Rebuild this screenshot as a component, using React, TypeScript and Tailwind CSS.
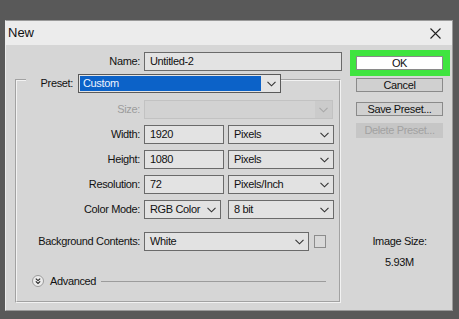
import React from "react";

const Chevron = ({ color = "#333" }: { color?: string }) => (
  <svg width="9" height="6" viewBox="0 0 9 6" className="shrink-0">
    <polyline points="0.5,0.8 4.5,4.8 8.5,0.8" fill="none" stroke={color} strokeWidth="1.1" />
  </svg>
);

const Select = ({ value, w }: { value: string; w: string }) => (
  <div className={`flex h-[19px] shrink-0 items-center justify-between border border-[#6a6a6a] bg-[#e2e2e2] pl-[5px] pr-[4px] ${w}`}>
    <span>{value}</span>
    <Chevron />
  </div>
);

const Field = ({ value, w }: { value: string; w: string }) => (
  <div className={`flex h-[19px] shrink-0 items-center border border-[#6a6a6a] bg-[#e3e3e3] pl-[5px] ${w}`}>
    {value}
  </div>
);

const Row = ({ label, children, dim }: { label: string; children: React.ReactNode; dim?: boolean }) => (
  <div className="flex h-[19px] items-center gap-[4px]">
    <span className={`w-[123px] shrink-0 text-right ${dim ? "text-[#9c9c9c]" : ""}`}>{label}</span>
    {children}
  </div>
);

export default function App() {
  return (
    <div className="h-[319px] w-[459px] overflow-hidden bg-[#595959] pl-[5px] pt-[20px] font-['Liberation_Sans',Arial,sans-serif] text-[11px] tracking-[-0.35px] text-[#111]">
      <div className="flex h-[291px] w-[448px] flex-col border border-[#9a9a9a] border-l-[#ececec] bg-[#d6d6d6]">
        {/* title bar */}
        <div className="flex h-[24px] shrink-0 items-center justify-between bg-[#ececec] pl-[2px] pr-[11px]">
          <span className="text-[13px] tracking-normal">New</span>
          <svg width="11" height="11" viewBox="0 0 11 11">
            <path d="M0.5 0.5 L10.5 10.5 M10.5 0.5 L0.5 10.5" stroke="#222" strokeWidth="1.1" />
          </svg>
        </div>

        <div className="flex">
          {/* left side */}
          <div className="w-[335px] shrink-0 pt-[7px]">
            <div className="flex h-[19px] items-center gap-[4px]">
              <span className="w-[134px] shrink-0 text-right">Name:</span>
              <Field value="Untitled-2" w="w-[198px]" />
            </div>

            <div className="ml-[9px] mt-[8px] w-[326px] border border-[#a2a2a2] border-b-[#f2f2f2] border-r-[#f2f2f2]">
              <div className="border border-[#f2f2f2] border-b-[#a2a2a2] border-r-[#a2a2a2] pb-[14px]">
                {/* legend */}
                <div className="-mt-[7px] flex h-[19px] items-center pl-[9px]">
                  <span className="flex h-[19px] w-[52px] items-center justify-end bg-[#d6d6d6] pr-[5px]">Preset:</span>
                  <div className="flex h-[19px] w-[203px] items-stretch border border-[#5a5a5a] bg-[#e4e4e4]">
                    <span className="m-[1px] flex flex-1 items-center bg-[#0c62c8] pl-[3px] text-[#eef4ff]">Custom</span>
                    <span className="flex w-[18px] items-center justify-center">
                      <Chevron />
                    </span>
                  </div>
                </div>

                <div className="mt-[7px] flex flex-col gap-[6px]">
                  <Row label="Size:" dim>
                    <div className="flex h-[19px] w-[189px] items-center justify-end border border-[#c2c2c2] bg-[#d2d2d2]">
                      <span className="flex h-full w-[17px] items-center justify-center bg-[#cbcbcb]">
                        <Chevron color="#a8a8a8" />
                      </span>
                    </div>
                  </Row>
                  <Row label="Width:">
                    <Field value="1920" w="w-[80px]" />
                    <Select value="Pixels" w="w-[106px]" />
                  </Row>
                  <Row label="Height:">
                    <Field value="1080" w="w-[80px]" />
                    <Select value="Pixels" w="w-[106px]" />
                  </Row>
                  <Row label="Resolution:">
                    <Field value="72" w="w-[80px]" />
                    <Select value="Pixels/Inch" w="w-[106px]" />
                  </Row>
                  <Row label="Color Mode:">
                    <Select value="RGB Color" w="w-[77px]" />
                    <div className="ml-[3px]">
                      <Select value="8 bit" w="w-[106px]" />
                    </div>
                  </Row>
                </div>

                <div className="mt-[13px]">
                  <Row label="Background Contents:">
                    <Select value="White" w="w-[165px]" />
                    <span className="ml-[1px] h-[13px] w-[12px] border border-[#8c8c8c] bg-[#d9d9d9]" />
                  </Row>
                </div>

                <div className="ml-[15px] mt-[24px] flex h-[12px] items-center">
                  <svg width="12" height="12" viewBox="0 0 12 12" className="shrink-0">
                    <circle cx="6" cy="6" r="5.5" fill="#ececec" stroke="#9a9a9a" />
                    <polyline points="3.8,3.6 6,5.6 8.2,3.6" fill="none" stroke="#222" strokeWidth="1.1" />
                    <polyline points="3.8,6.4 6,8.4 8.2,6.4" fill="none" stroke="#222" strokeWidth="1.1" />
                  </svg>
                  <span className="ml-[6px]">Advanced</span>
                  <span className="ml-[5px] mr-[13px] h-px flex-1 bg-[#9c9c9c]" />
                </div>
              </div>
            </div>
          </div>

          {/* right side */}
          <div className="ml-[9px] flex w-[100px] flex-col pt-[5px]">
            <div className="h-[26px] w-[100px] bg-[#3fe43f] pl-[6px] pt-[6px]">
              <div className="h-[14px] w-[87px] border border-[#8a8a8a] bg-white text-center leading-[12px]">OK</div>
            </div>
            <div className="ml-[6px] mt-[2px] h-[14px] w-[87px] border border-[#8a8a8a] bg-[#d0d0d0] text-center leading-[12px]">Cancel</div>
            <div className="ml-[6px] mt-[10px] h-[14px] w-[87px] border border-[#8a8a8a] bg-[#d0d0d0] text-center leading-[12px]">Save Preset...</div>
            <div className="ml-[6px] mt-[7px] h-[15px] w-[87px] bg-[#c6c6c6] text-center leading-[15px] text-[#a2a2a2]">Delete Preset...</div>
            <div className="ml-[6px] mt-[97px] w-[87px] text-center leading-[12px]">Image Size:</div>
            <div className="ml-[6px] mt-[9px] w-[87px] text-center leading-[12px]">5.93M</div>
          </div>
        </div>
      </div>
    </div>
  );
}
